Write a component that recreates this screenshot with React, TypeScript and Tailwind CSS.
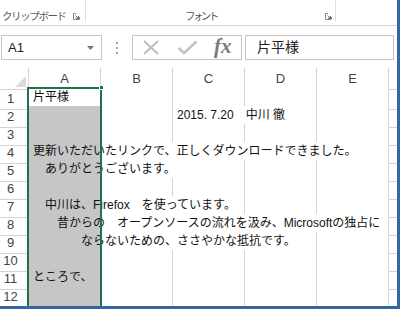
import React from "react";
import clsx from "clsx";

const cellFont = "font-['Liberation_Sans','Noto_Sans_CJK_JP',sans-serif]";
const uiFont = "font-['Noto_Sans_CJK_JP','Liberation_Sans',sans-serif]";

const cols = ["A", "B", "C", "D", "E"];

// text: where it starts (col index) and how many cells it runs over
type SheetRow = { n: number; text?: string; col?: number; span?: number; noLabel?: boolean };

const rows: SheetRow[] = [
  { n: 1, text: "片平様", col: 0, span: 1 },
  { n: 2, text: "2015. 7.20　中川 徹", col: 2, span: 2 },
  { n: 3 },
  { n: 4, text: "更新いただいたリンクで、正しくダウンロードできました。", col: 0, span: 5 },
  { n: 5, text: "　ありがとうございます。", col: 0, span: 3 },
  { n: 6 },
  { n: 7, text: "　中川は、Firefox　を使っています。", col: 0, span: 3 },
  { n: 8, text: "　　昔からの　オープンソースの流れを汲み、Microsoftの独占に", col: 0, span: 5 },
  { n: 9, text: "　　　　ならないための、ささやかな抵抗です。", col: 0, span: 4 },
  { n: 10 },
  { n: 11, text: "ところで、", col: 0, span: 1 },
  { n: 12 },
  // only the top few pixels of row 13 show
  { n: 13, noLabel: true },
];

const Launcher = () => (
  <svg width="7" height="7" viewBox="0 0 7 7">
    <path d="M0.5 0.5 H3 M0.5 0.5 V6.5 H6.5 V4" stroke="#8a8a8a" strokeWidth="1" fill="none" />
    <path d="M2.5 2.5 L5.5 5.5 M5.5 3 V5.5 H3" stroke="#6a6a6a" strokeWidth="1" fill="none" />
  </svg>
);

const Ribbon = () => (
  <div className={clsx("flex h-[26px] border-b border-[#d5d5d5] text-[#5a5a5a]", uiFont)}>
    <div className="flex w-[85px] items-center pl-[2px] pt-[6px]">
      <span className="text-[10.5px] tracking-[-1.4px]">クリップボード</span>
      <span className="ml-auto mr-[5px] mt-[2px]">
        <Launcher />
      </span>
    </div>
    <div className="h-[22px] w-[1px] bg-[#e1e1e1]" />
    <div className="flex w-[249px] items-center pl-[99px] pt-[6px]">
      <span className="text-[10.5px] tracking-[-2.6px]">フォント</span>
      <span className="ml-auto mr-[3px] mt-[2px]">
        <Launcher />
      </span>
    </div>
    <div className="h-[22px] w-[1px] bg-[#e1e1e1]" />
  </div>
);

const FormulaBar = () => (
  <div className="flex h-[42px] items-start pt-[9px]">
    <div className="ml-[1px] flex h-[25px] w-[101px] items-center justify-between border border-[#c6c6c6] pl-[6px] pr-[7px]">
      <span className={clsx("text-[13px] text-[#222]", cellFont)}>A1</span>
      <svg width="7" height="4" viewBox="0 0 7 4">
        <path d="M0 0 H7 L3.5 4 Z" fill="#777" />
      </svg>
    </div>
    <div className="flex h-[25px] w-[30px] flex-col items-center justify-center gap-[3px]">
      <span className="h-[2px] w-[2px] bg-[#a0a0a0]" />
      <span className="h-[2px] w-[2px] bg-[#a0a0a0]" />
      <span className="h-[2px] w-[2px] bg-[#a0a0a0]" />
    </div>
    <div className="flex h-[25px] w-[110px] items-center border border-[#c6c6c6]">
      <svg className="ml-[10px]" width="16" height="15" viewBox="0 0 16 15">
        <path d="M1 1 L15 14 M15 1 L1 14" stroke="#bdbdbd" strokeWidth="2" />
      </svg>
      <svg className="ml-[18px]" width="21" height="15" viewBox="0 0 21 15">
        <path d="M1.5 8 L7 13 L19.5 1.5" stroke="#c2c2c2" strokeWidth="2.6" fill="none" />
      </svg>
      <span className="ml-[16px] pb-[2px] font-['Liberation_Serif',serif] text-[21px] font-bold italic leading-none text-[#7a7a7a]">
        fx
      </span>
    </div>
    <div className="ml-[3px] flex h-[25px] w-[149px] items-center border border-[#c6c6c6] pl-[11px]">
      <span className={clsx("text-[14px] text-[#222]", cellFont)}>片平様</span>
    </div>
  </div>
);

const HeaderRow = () => (
  <div className={clsx("grid h-[20px] grid-cols-[29px_repeat(5,72px)_1fr] text-[13px] text-[#444]", cellFont)}>
    <div className="flex items-end justify-end border-b border-r border-[#d4d4d4] pb-[2px] pr-[2px]">
      <svg width="11" height="11" viewBox="0 0 11 11">
        <path d="M11 0 V11 H0 Z" fill="#dcdcdc" />
      </svg>
    </div>
    {cols.map((c) => (
      <div key={c} className="flex items-center justify-center border-b border-r border-[#d4d4d4] pt-[1px]">
        {c}
      </div>
    ))}
    <div className="border-b border-[#d4d4d4]" />
  </div>
);

const Row = ({ row }: { row: SheetRow }) => {
  const start = row.col ?? -1;
  const end = start + (row.span ?? 0) - 1;
  return (
    <div className="grid h-[18px] grid-cols-[29px_repeat(5,72px)_1fr]">
      <div
        className={clsx(
          "flex items-center justify-center border-b border-r border-[#d4d4d4] pr-[7px] pt-[1px] text-[13px] text-[#444]",
          cellFont
        )}
      >
        {row.noLabel ? "" : row.n}
      </div>
      {cols.map((c, i) => (
        <div
          key={c}
          className={clsx(
            "border-b border-[#d4d4d4]",
            i >= start && i < end ? "" : "border-r",
            i === 0 && row.n !== 1 ? "bg-[#c6c6c6]" : "bg-white"
          )}
        >
          {i === start && row.text && (
            <span
              className={clsx(
                "relative z-10 block whitespace-nowrap pl-[4px] pt-[1px] text-[12px] leading-[16px] text-[#111]",
                cellFont
              )}
            >
              {row.text}
            </span>
          )}
        </div>
      ))}
      <div className="border-b border-[#d4d4d4]" />
    </div>
  );
};

export default function App() {
  return (
    <div className="h-[309px] w-[400px] overflow-hidden border-b-[3px] border-r-[3px] border-[#35669f] bg-white">
      <Ribbon />
      <FormulaBar />
      <HeaderRow />
      <div className="relative">
        {rows.map((r) => (
          <Row key={r.n} row={r} />
        ))}
        {/* selection frame on column A */}
        <div className="pointer-events-none absolute bottom-0 left-[27px] top-[-1px] z-20 w-[75px] border-2 border-b-0 border-[#217346]">
          <span className="absolute right-[-4px] top-[-4px] h-[5px] w-[5px] border border-white bg-[#217346]" />
        </div>
      </div>
    </div>
  );
}
